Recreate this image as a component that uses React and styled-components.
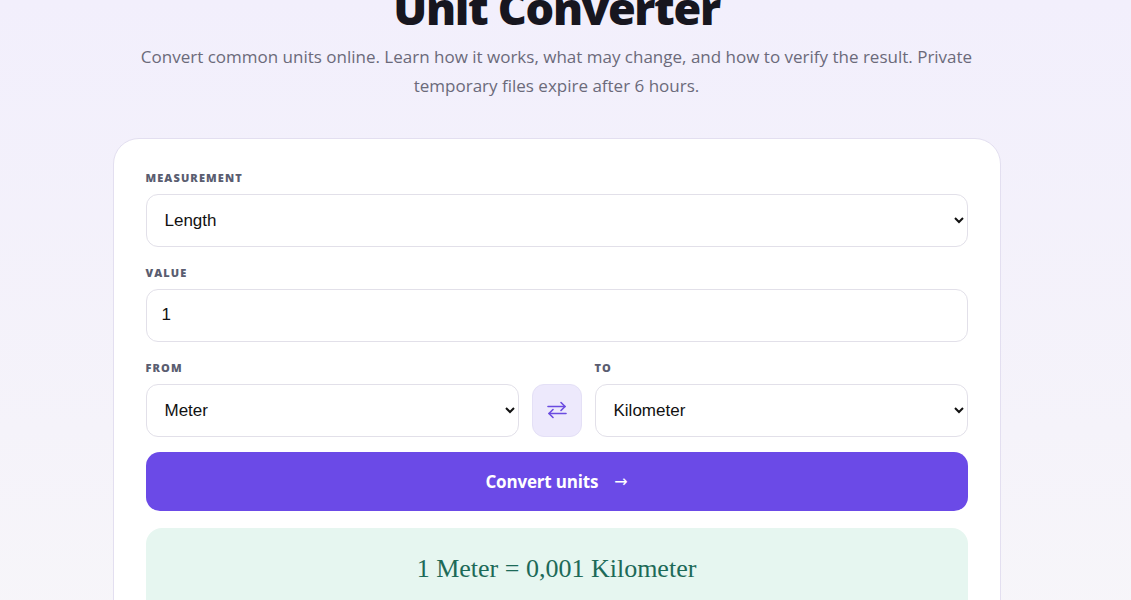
import { useState } from "react";
import styled, { createGlobalStyle } from "styled-components";

const GlobalStyle = createGlobalStyle`
  html, body {
    margin: 0;
    padding: 0;
  }
  body {
    min-height: 100vh;
    background: linear-gradient(180deg, #f2effc 0%, #f5f3fa 60%, #f8f7f9 100%);
    font-family: "Open Sans", "Noto Sans", sans-serif;
    color: #17161f;
  }
`;

const Page = styled.main`
  display: flex;
  flex-direction: column;
  align-items: center;
  padding: 0 18px 60px 0;
  overflow: hidden;
`;

const Title = styled.h1`
  margin: -17px 0 0;
  font-size: 45px;
  line-height: 1.1;
  font-weight: 800;
  letter-spacing: -0.03em;
  color: #17161f;
`;

const Lead = styled.p`
  margin: 9px 0 0;
  max-width: 860px;
  text-align: center;
  font-size: 17px;
  line-height: 29px;
  color: #6b6a7a;
`;

const Card = styled.section`
  box-sizing: border-box;
  width: 888px;
  margin-top: 38px;
  padding: 32px;
  background: #ffffff;
  border: 1px solid #e3dff0;
  border-radius: 26px;
  display: flex;
  flex-direction: column;
`;

const Field = styled.div`
  display: flex;
  flex-direction: column;
  margin-bottom: ${(p) => p.$gap ?? 19}px;
  flex: ${(p) => (p.$grow ? 1 : "none")};
`;

const Label = styled.label`
  display: block;
  font-size: 11px;
  line-height: 14px;
  font-weight: 800;
  letter-spacing: 0.1em;
  text-transform: uppercase;
  color: #5a5d70;
  margin-bottom: 9px;
`;

const controlBase = `
  box-sizing: border-box;
  width: 100%;
  height: 53px;
  padding: 0 14px 0 14px;
  border: 1px solid #e2e0e9;
  border-radius: 12px;
  background: #ffffff;
  font-family: "Liberation Sans", Arial, sans-serif;
  font-size: 17px;
  color: #111111;
  outline: none;
`;

const Select = styled.select`
  ${controlBase}
`;

const Input = styled.input`
  ${controlBase}
  padding-left: 15px;
`;

const Row = styled.div`
  display: flex;
  align-items: flex-end;
  gap: 13px;
  margin-bottom: 15px;
`;

const SwapButton = styled.button`
  flex: none;
  width: 50px;
  height: 53px;
  display: grid;
  place-items: center;
  padding: 0;
  border: 1px solid #e4e0f6;
  border-radius: 12px;
  background: #ede9fc;
  color: #6a4be0;
  cursor: pointer;
`;

const ConvertButton = styled.button`
  height: 59px;
  display: flex;
  align-items: center;
  justify-content: center;
  gap: 16px;
  border: none;
  border-radius: 14px;
  background: #6b4ae7;
  color: #ffffff;
  font-family: "Open Sans", "Noto Sans", sans-serif;
  font-size: 17px;
  font-weight: 700;
  letter-spacing: -0.01em;
  cursor: pointer;
  margin-bottom: 17px;
`;

const Arrow = styled.span`
  font-family: "DejaVu Sans", sans-serif;
  font-weight: 400;
  font-size: 16px;
`;

const Result = styled.div`
  background: #e6f6f0;
  border-radius: 16px;
  padding: 26px 20px 40px;
  text-align: center;
  font-family: Georgia, "Liberation Serif", serif;
  font-size: 26px;
  color: #1d6a58;
`;

function SwapIcon() {
  return (
    <svg width="22" height="18" viewBox="0 0 22 18" fill="none" stroke="currentColor" strokeWidth="1.6" strokeLinecap="round" strokeLinejoin="round">
      <path d="M2 5.5h17" />
      <path d="M15 1.5l4 4-4 4" />
      <path d="M20 12.5H3" />
      <path d="M7 8.5l-4 4 4 4" />
    </svg>
  );
}

const factors = { Meter: 1, Kilometer: 1000, Centimeter: 0.01, Millimeter: 0.001, Mile: 1609.344, Foot: 0.3048, Inch: 0.0254 };

export default function App() {
  const [value, setValue] = useState("1");
  const [from, setFrom] = useState("Meter");
  const [to, setTo] = useState("Kilometer");

  const result = ((parseFloat(value) || 0) * factors[from]) / factors[to];
  const shown = String(+result.toPrecision(10)).replace(".", ",");

  return (
    <>
      <GlobalStyle />
      <Page>
        <Title>Unit Converter</Title>
        <Lead>
          Convert common units online. Learn how it works, what may change, and how to verify the result. Private
          temporary files expire after 6 hours.
        </Lead>
        <Card>
          <Field>
            <Label>Measurement</Label>
            <Select defaultValue="Length">
              <option>Length</option>
              <option>Weight</option>
              <option>Temperature</option>
            </Select>
          </Field>
          <Field>
            <Label>Value</Label>
            <Input value={value} onChange={(e) => setValue(e.target.value)} />
          </Field>
          <Row>
            <Field $grow $gap={0}>
              <Label>From</Label>
              <Select value={from} onChange={(e) => setFrom(e.target.value)}>
                {Object.keys(factors).map((u) => (
                  <option key={u}>{u}</option>
                ))}
              </Select>
            </Field>
            <SwapButton
              aria-label="Swap units"
              onClick={() => {
                setFrom(to);
                setTo(from);
              }}
            >
              <SwapIcon />
            </SwapButton>
            <Field $grow $gap={0}>
              <Label>To</Label>
              <Select value={to} onChange={(e) => setTo(e.target.value)}>
                {Object.keys(factors).map((u) => (
                  <option key={u}>{u}</option>
                ))}
              </Select>
            </Field>
          </Row>
          <ConvertButton>
            Convert units <Arrow>→</Arrow>
          </ConvertButton>
          <Result>
            {value || 0} {from} = {shown} {to}
          </Result>
        </Card>
      </Page>
    </>
  );
}
